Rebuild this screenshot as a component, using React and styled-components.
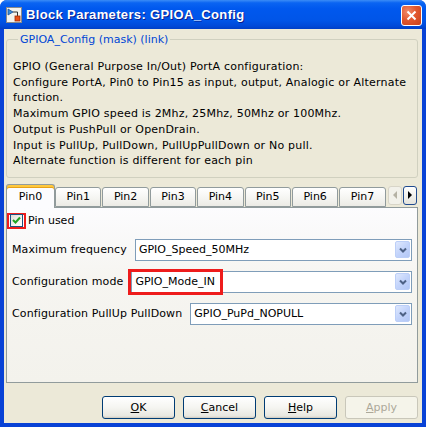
import React from 'react';
import styled, { createGlobalStyle } from 'styled-components';

const UI_FONT = '"DejaVu Sans", Verdana, sans-serif';

const GlobalStyle = createGlobalStyle`
  html, body {
    margin: 0;
    padding: 0;
    background: #ffffff;
    overflow: hidden;
  }
`;

const Window = styled.div`
  width: 426px;
  height: 427px;
  box-sizing: border-box;
  display: flex;
  flex-direction: column;
  background: #0842d6;
  border-radius: 7px 7px 0 0;
  font-family: ${UI_FONT};
  font-size: 11px;
  color: #000;
  overflow: hidden;
`;

const TitleBar = styled.div`
  height: 29px;
  flex: none;
  display: flex;
  align-items: center;
  padding: 0 4px 0 6px;
  box-sizing: border-box;
  background: linear-gradient(
    to bottom,
    #3b8cf6 0%,
    #0a64f2 10%,
    #0058ee 30%,
    #0055e8 70%,
    #0049d8 90%,
    #003fc6 100%
  );
`;

const TitleIcon = styled.svg`
  width: 16px;
  height: 16px;
  flex: none;
  margin-top: 1px;
`;

const TitleText = styled.div`
  flex: 1;
  margin-left: 4px;
  color: #ffffff;
  font-family: "Liberation Sans", Arial, sans-serif;
  font-weight: 700;
  font-size: 13px;
  letter-spacing: 0.35px;
  text-shadow: 1px 1px 0 #0a1e8c;
  white-space: nowrap;
`;

const CloseButton = styled.div`
  width: 21px;
  height: 21px;
  box-sizing: border-box;
  border: 1px solid #ffffff;
  border-radius: 3px;
  background: radial-gradient(circle at 30% 30%, #f08a6a 0%, #e2582f 45%, #c8401a 100%);
  display: flex;
  align-items: center;
  justify-content: center;
  margin-top: 1px;
`;

const Client = styled.div`
  flex: 1;
  margin: 0 4px 4px 4px;
  background: #ece9d8;
  display: flex;
  flex-direction: column;
  padding: 0 4px 4px 2px;
`;

const GroupBox = styled.fieldset`
  margin: 4px 0 0 0;
  padding: 13px 6px 8px 6px;
  border: 1px solid #d0d0bf;
  border-radius: 3px;
  min-width: 0;
`;

const Legend = styled.legend`
  color: #0046d5;
  padding: 0 2px;
  margin-left: 5px;
`;

const Description = styled.div`
  line-height: 15.7px;
  letter-spacing: 0.2px;
`;

const TabStrip = styled.div`
  margin-top: 6px;
  height: 23px;
  display: flex;
  align-items: flex-end;
  position: relative;
  z-index: 1;
`;

const Tab = styled.div`
  flex: none;
  box-sizing: border-box;
  width: ${p => (p.$active ? 49 : 46.4)}px;
  height: ${p => (p.$active ? 24 : 20)}px;
  margin-right: ${p => (p.$active ? 0 : 1)}px;
  margin-bottom: ${p => (p.$active ? -1 : 0)}px;
  display: flex;
  align-items: center;
  justify-content: center;
  border: 1px solid #919b9c;
  border-bottom: ${p => (p.$active ? 'none' : '1px solid #919b9c')};
  border-radius: 3px 3px 0 0;
  padding-top: ${p => (p.$active ? 1 : 0)}px;
  background: ${p =>
    p.$active
      ? '#fcfcfe'
      : 'linear-gradient(to bottom, #ffffff 0%, #f6f6f3 50%, #ecebe5 100%)'};
  box-shadow: ${p => (p.$active ? 'inset 0 2px 0 #ffc83c, inset 0 3px 0 #e6a21a' : 'none')};
`;

const TabScroll = styled.div`
  margin-left: 1px;
  height: 20px;
  display: flex;
  gap: 1px;
  align-self: flex-end;
  margin-bottom: 1px;
`;

const ScrollButton = styled.div`
  width: 14px;
  height: 19px;
  box-sizing: border-box;
  display: flex;
  align-items: center;
  justify-content: center;
  border-radius: 3px;
  border: 1px solid ${p => (p.$disabled ? '#d8d5c8' : '#1f4a8f')};
  background: ${p => (p.$disabled ? '#f2f1ea' : 'linear-gradient(#ffffff, #e4e3dc)')};
`;

const Arrow = styled.span`
  width: 0;
  height: 0;
  border-top: 4px solid transparent;
  border-bottom: 4px solid transparent;
  ${p =>
    p.$left
      ? `border-right: 4px solid ${p.$disabled ? '#b5b2a4' : '#000'};`
      : `border-left: 4px solid ${p.$disabled ? '#b5b2a4' : '#000'};`}
`;

const Panel = styled.div`
  height: 176px;
  box-sizing: border-box;
  border: 1px solid #919b9c;
  background: linear-gradient(to bottom, #fcfcfe 0%, #f6f5f1 40%, #f3f2ec 100%);
  padding: 5px 5px 0 0;
  display: flex;
  flex-direction: column;
  gap: 10px;
`;

const CheckRow = styled.div`
  display: flex;
  align-items: center;
  height: 16px;
`;

const CheckHighlight = styled.div`
  width: 19px;
  height: 16px;
  box-sizing: border-box;
  border: 2px solid #ee1c1c;
  display: flex;
  align-items: center;
  justify-content: center;
`;

const CheckBox = styled.div`
  flex: none;
  width: 13px;
  height: 13px;
  box-sizing: border-box;
  border: 1px solid #1c5180;
  background: linear-gradient(135deg, #dcdbd5 0%, #f4f4f0 60%, #ffffff 100%);
  display: flex;
  align-items: center;
  justify-content: center;
`;

const CheckLabel = styled.span`
  margin-left: 2px;
`;

const ParamRow = styled.div`
  display: flex;
  align-items: center;
  height: 22px;
  padding-left: 5px;
`;

const ParamLabel = styled.span`
  flex: none;
  margin-right: ${p => p.$gap}px;
  letter-spacing: 0.12px;
  white-space: nowrap;
`;

const Select = styled.div`
  flex: 1;
  height: 22px;
  box-sizing: border-box;
  position: relative;
  display: flex;
  align-items: center;
  background: #ffffff;
  border: 1px solid #7f9db9;
  padding-left: 3px;
`;

const SelectValue = styled.span`
  flex: 1;
  white-space: nowrap;
`;

const DropButton = styled.div`
  width: 15px;
  height: 17px;
  margin-right: 1px;
  box-sizing: border-box;
  border: 1px solid #bccff8;
  border-radius: 2px;
  background: linear-gradient(135deg, #dfe8fd 0%, #c3d4fb 50%, #b3c7f5 100%);
  display: flex;
  align-items: center;
  justify-content: center;
`;

const ValueHighlight = styled.div`
  position: absolute;
  left: -4px;
  top: -3px;
  width: 95px;
  height: 26px;
  box-sizing: border-box;
  border: 3px solid #ee1c1c;
  pointer-events: none;
`;

const ButtonRow = styled.div`
  margin-top: auto;
  display: flex;
  justify-content: flex-end;
  gap: 8px;
`;

const DialogButton = styled.div`
  width: 73px;
  height: 23px;
  box-sizing: border-box;
  display: flex;
  align-items: center;
  justify-content: center;
  border-radius: 3px;
  border: 1px solid ${p => (p.$disabled ? '#c9c7ba' : '#003c74')};
  background: ${p =>
    p.$disabled
      ? '#f5f4ea'
      : 'linear-gradient(to bottom, #ffffff 0%, #f5f5f1 50%, #e8e7e0 90%, #d6d0c5 100%)'};
  color: ${p => (p.$disabled ? '#aca899' : '#000')};
  box-shadow: ${p => (p.$disabled ? 'none' : 'inset 0 -1px 0 #d6d0c5')};

  u {
    text-decoration: underline;
  }
`;

const Chevron = () => (
  <svg width="8" height="6" viewBox="0 0 8 6">
    <path d="M1 1.5 L4 4.5 L7 1.5" fill="none" stroke="#4d6185" strokeWidth="2" />
  </svg>
);

const descriptionLines = [
  'GPIO (General Purpose In/Out) PortA configuration:',
  'Configure PortA, Pin0 to Pin15 as input, output, Analogic or Alternate',
  'function.',
  'Maximum GPIO speed is 2Mhz, 25Mhz, 50Mhz or 100Mhz.',
  'Output is PushPull or OpenDrain.',
  'Input is PullUp, PullDown, PullUpPullDown or No pull.',
  'Alternate function is different for each pin',
];

const tabs = ['Pin0', 'Pin1', 'Pin2', 'Pin3', 'Pin4', 'Pin5', 'Pin6', 'Pin7'];

const params = [
  { label: 'Maximum frequency', value: 'GPIO_Speed_50MHz', gap: 8 },
  { label: 'Configuration mode', value: 'GPIO_Mode_IN', gap: 8, marked: true },
  { label: 'Configuration PullUp PullDown', value: 'GPIO_PuPd_NOPULL', gap: 8 },
];

const App = () => (
  <>
    <GlobalStyle />
    <Window>
      <TitleBar>
        <TitleIcon viewBox="0 0 16 16">
          <rect x="0.5" y="0.5" width="15" height="15" fill="#f4f3ee" stroke="#8a8a8a" />
          <path d="M2 2 L2 8 L7 5 Z" fill="#3a8fd8" stroke="#1a4f9a" strokeWidth="0.8" />
          <path d="M7 5 L11.5 5 L11.5 9" fill="none" stroke="#333" strokeWidth="1" />
          <rect x="9" y="9" width="5" height="5" fill="#e8501a" stroke="#a02a00" strokeWidth="0.8" />
        </TitleIcon>
        <TitleText>Block Parameters: GPIOA_Config</TitleText>
        <CloseButton>
          <svg width="11" height="11" viewBox="0 0 11 11">
            <path d="M1.5 1.5 L9.5 9.5 M9.5 1.5 L1.5 9.5" stroke="#ffffff" strokeWidth="2" />
          </svg>
        </CloseButton>
      </TitleBar>

      <Client>
        <GroupBox>
          <Legend>GPIOA_Config (mask) (link)</Legend>
          <Description>
            {descriptionLines.map(line => (
              <div key={line}>{line}</div>
            ))}
          </Description>
        </GroupBox>

        <TabStrip>
          {tabs.map((t, i) => (
            <Tab key={t} $active={i === 0}>
              {t}
            </Tab>
          ))}
          <TabScroll>
            <ScrollButton $disabled>
              <Arrow $left $disabled />
            </ScrollButton>
            <ScrollButton>
              <Arrow />
            </ScrollButton>
          </TabScroll>
        </TabStrip>

        <Panel>
          <CheckRow>
            <CheckHighlight>
              <CheckBox>
                <svg width="9" height="9" viewBox="0 0 9 9">
                  <path d="M1 4 L3.5 6.5 L8 1.5" fill="none" stroke="#21a121" strokeWidth="2" />
                </svg>
              </CheckBox>
            </CheckHighlight>
            <CheckLabel>Pin used</CheckLabel>
          </CheckRow>

          {params.map(p => (
            <ParamRow key={p.label}>
              <ParamLabel $gap={p.gap}>{p.label}</ParamLabel>
              <Select>
                <SelectValue>{p.value}</SelectValue>
                <DropButton>
                  <Chevron />
                </DropButton>
                {p.marked && <ValueHighlight />}
              </Select>
            </ParamRow>
          ))}
        </Panel>

        <ButtonRow>
          <DialogButton>
            <span><u>O</u>K</span>
          </DialogButton>
          <DialogButton>
            <span><u>C</u>ancel</span>
          </DialogButton>
          <DialogButton>
            <span><u>H</u>elp</span>
          </DialogButton>
          <DialogButton $disabled>
            <span><u>A</u>pply</span>
          </DialogButton>
        </ButtonRow>
      </Client>
    </Window>
  </>
);

export default App;
